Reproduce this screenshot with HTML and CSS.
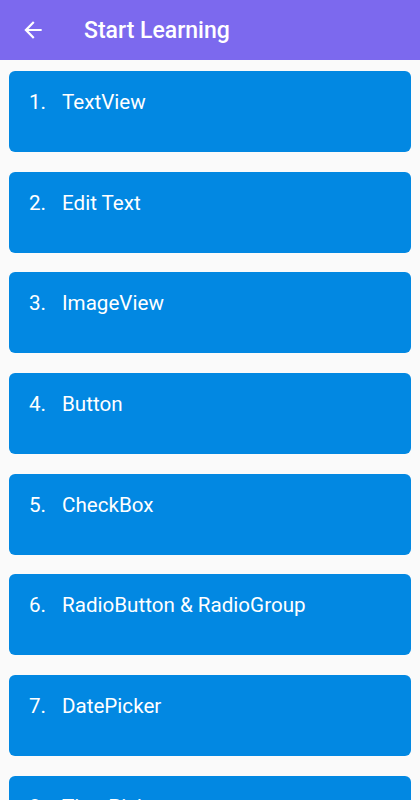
FILE: index.html
```html
<!DOCTYPE html>
<html lang="en">
<head>
    <meta charset="UTF-8">
    <title>Start Learning</title>
    <link rel="stylesheet" href="styles.css">
</head>
<body>
    <div class="toolbar">
        <svg class="back" width="24" height="24" viewBox="0 0 24 24">
            <path d="M20 11H7.83l5.59-5.59L12 4l-8 8 8 8 1.41-1.41L7.83 13H20v-2z" fill="#fff"/>
        </svg>
        <h1>Start Learning</h1>
    </div>

    <div class="list">
        <div class="item"><span class="num">1.</span><span>TextView</span></div>
        <div class="item"><span class="num">2.</span><span>Edit Text</span></div>
        <div class="item"><span class="num">3.</span><span>ImageView</span></div>
        <div class="item"><span class="num">4.</span><span>Button</span></div>
        <div class="item"><span class="num">5.</span><span>CheckBox</span></div>
        <div class="item"><span class="num">6.</span><span>RadioButton &amp; RadioGroup</span></div>
        <div class="item"><span class="num">7.</span><span>DatePicker</span></div>
        <div class="item"><span class="num">8.</span><span>TimePicker</span></div>
    </div>
</body>
</html>
```

FILE: styles.css
```css
html, body {
    margin: 0;
    padding: 0;
    background-color: #fafafa;
    overflow: hidden;
}
body {
    font-family: Roboto, "Liberation Sans", sans-serif;
    height: 800px;
}
.toolbar {
    height: 60px;
    background-color: #7c69ee;
    display: flex;
    align-items: center;
    padding-left: 20px;
}
.toolbar .back {
    width: 26px;
    height: 26px;
}
.toolbar h1 {
    margin: 0 0 0 38px;
    color: #fff;
    font-size: 23px;
    font-weight: 500;
}
.list {
    padding: 11px 9px 0 9px;
    display: flex;
    flex-direction: column;
    gap: 19.7px;
}
.item {
    height: 81px;
    box-sizing: border-box;
    background-color: #0288e2;
    border-radius: 6px;
    color: #fff;
    font-size: 20.6px;
    padding: 19px 0 0 20px;
    display: flex;
    flex-shrink: 0;
}
.item .num {
    width: 33px;
}
```
